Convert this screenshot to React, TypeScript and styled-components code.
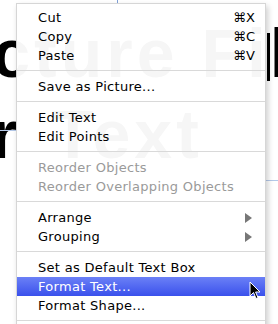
import React from "react";
import styled, { createGlobalStyle, css } from "styled-components";

const Global = createGlobalStyle`
  html, body { margin: 0; padding: 0; background: #fff; }
  #root { width: 278px; height: 324px; }
`;

const Canvas = styled.div`
  position: relative;
  width: 278px;
  height: 324px;
  overflow: hidden;
  background: #fff;
  font-family: "DejaVu Sans", "Liberation Sans", sans-serif;
`;

const BigText = styled.div<{ $x: number; $y: number }>`
  position: absolute;
  left: ${(p) => p.$x}px;
  top: ${(p) => p.$y}px;
  font-family: "Liberation Sans", Arial, sans-serif;
  font-weight: 700;
  font-size: 68px;
  letter-spacing: 4px;
  line-height: 1;
  color: #000;
  white-space: nowrap;
`;

const GuideLine = styled.div<{ $x: number; $y: number; $w: number }>`
  position: absolute;
  left: ${(p) => p.$x}px;
  top: ${(p) => p.$y}px;
  width: ${(p) => p.$w}px;
  height: 1px;
  background: #b4c8e8;
`;

const Tick = styled.div`
  position: absolute;
  left: 117px;
  top: 0;
  width: 1px;
  height: 4px;
  background: #7fa0d8;
`;

const Caret = styled.div`
  position: absolute;
  left: 267px;
  top: 33px;
  width: 3px;
  height: 48px;
  background: #000;
`;

const Menu = styled.div`
  position: absolute;
  left: 16px;
  top: 3px;
  width: 250px;
  height: 330px;
  padding: 4px 0 0;
  box-sizing: border-box;
  display: flex;
  flex-direction: column;
  background: rgba(255, 255, 255, 0.965);
  border: 1px solid rgba(0, 0, 0, 0.16);
  border-bottom: none;
  box-shadow: 2px 3px 6px rgba(0, 0, 0, 0.2);
`;

const Item = styled.div<{ $disabled?: boolean; $active?: boolean }>`
  display: flex;
  align-items: center;
  height: 19px;
  flex: none;
  padding: 0 12px 0 21px;
  font-size: 13px;
  letter-spacing: 0.3px;
  color: ${(p) => (p.$disabled ? "#9a9a9a" : "#000")};
  ${(p) =>
    p.$active &&
    css`
      background: linear-gradient(#6b80f6, #3a51ec);
      color: #fff;
    `}
`;

const Label = styled.span`
  flex: 1;
  white-space: nowrap;
`;

const Shortcut = styled.span`
  width: 20px;
  white-space: nowrap;
  letter-spacing: 0;
`;

const SubArrow = styled.span`
  width: 0;
  height: 0;
  margin-right: 1px;
  border-top: 5px solid transparent;
  border-bottom: 5px solid transparent;
  border-left: 7px solid #777;
`;

const Separator = styled.div`
  flex: none;
  height: 1px;
  margin: 5px 0 6px;
  background: #d9d9d9;
`;

const Cursor = styled.svg`
  position: absolute;
  left: 249px;
  top: 281px;
`;

type Entry =
  | { kind: "sep" }
  | {
      kind: "item";
      label: string;
      shortcut?: string;
      sub?: boolean;
      disabled?: boolean;
      active?: boolean;
    };

const entries: Entry[] = [
  { kind: "item", label: "Cut", shortcut: "⌘X" },
  { kind: "item", label: "Copy", shortcut: "⌘C" },
  { kind: "item", label: "Paste", shortcut: "⌘V" },
  { kind: "sep" },
  { kind: "item", label: "Save as Picture..." },
  { kind: "sep" },
  { kind: "item", label: "Edit Text" },
  { kind: "item", label: "Edit Points" },
  { kind: "sep" },
  { kind: "item", label: "Reorder Objects", disabled: true },
  { kind: "item", label: "Reorder Overlapping Objects", disabled: true },
  { kind: "sep" },
  { kind: "item", label: "Arrange", sub: true },
  { kind: "item", label: "Grouping", sub: true },
  { kind: "sep" },
  { kind: "item", label: "Set as Default Text Box" },
  { kind: "item", label: "Format Text...", active: true },
  { kind: "item", label: "Format Shape..." },
  { kind: "sep" },
];

export default function App() {
  return (
    <>
      <Global />
      <Canvas>
        <Tick />
        <BigText $x={-80} $y={19}>Picture Fill</BigText>
        <BigText $x={-9} $y={100}>r</BigText>
        <BigText $x={52} $y={100}>Text</BigText>
        <GuideLine $x={0} $y={130} $w={20} />
        <GuideLine $x={262} $y={180} $w={16} />
        <Caret />
        <Menu>
          {entries.map((e, i) =>
            e.kind === "sep" ? (
              <Separator key={i} />
            ) : (
              <Item key={i} $disabled={e.disabled} $active={e.active}>
                <Label>{e.label}</Label>
                {e.shortcut && <Shortcut>{e.shortcut}</Shortcut>}
                {e.sub && <SubArrow />}
              </Item>
            )
          )}
        </Menu>
        <Cursor width="12" height="19" viewBox="0 0 12 19">
          <path
            d="M1 1 L1 15 L4.5 11.5 L7 17.5 L9 16.7 L6.6 11 L11 11 Z"
            fill="#000"
            stroke="#fff"
            strokeWidth="1"
            strokeLinejoin="round"
          />
        </Cursor>
      </Canvas>
    </>
  );
}
